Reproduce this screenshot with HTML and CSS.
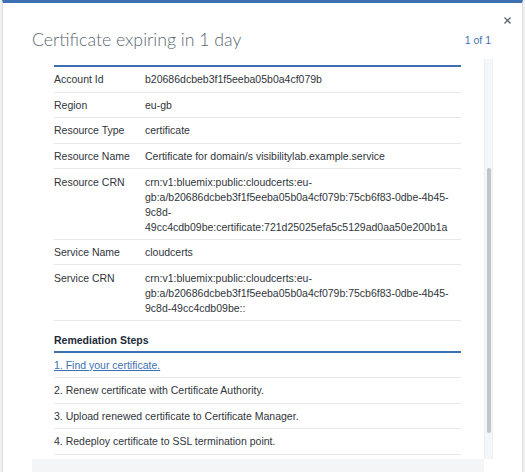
FILE: index.html
```html
<!DOCTYPE html>
<html lang="en">
<head>
<meta charset="utf-8">
<title>Certificate expiring in 1 day</title>
<link rel="stylesheet" href="styles.css">
</head>
<body>
<div class="modal" role="dialog" aria-labelledby="modal-title">
  <div class="modal-top">
    <button class="close" type="button" aria-label="Close">
      <svg width="7" height="7" viewBox="0 0 7 7" aria-hidden="true"><path d="M0.5 0.5L6.5 6.5M6.5 0.5L0.5 6.5" stroke="#5a6872" stroke-width="1.3" fill="none"/></svg>
    </button>
  </div>
  <div class="modal-header">
    <h2 class="title" id="modal-title">Certificate expiring in 1 day</h2>
    <span class="pager">1 of 1</span>
  </div>
  <div class="modal-body">
    <div class="scroll">
      <p class="summary">The certificate for domain/s visibilitylab.example.service managed in Certificate Manager will expire in 1 day. Renew and redeploy the certificate to avoid service interruption.</p>
      <h3 class="section-head">Certificate Details</h3>
      <table class="details">
        <tbody>
          <tr><td class="label">Account Id</td><td class="value">b20686dcbeb3f1f5eeba05b0a4cf079b</td></tr>
          <tr><td class="label">Region</td><td class="value">eu-gb</td></tr>
          <tr><td class="label">Resource Type</td><td class="value">certificate</td></tr>
          <tr><td class="label">Resource Name</td><td class="value">Certificate for domain/s visibilitylab.example.service</td></tr>
          <tr><td class="label">Resource CRN</td><td class="value">crn:v1:bluemix:public:cloudcerts:eu-<wbr>gb:a/b20686dcbeb3f1f5eeba05b0a4cf079b:75cb6f83-<wbr>0dbe-<wbr>4b45-<wbr>9c8d-<wbr>49cc4cdb09be:certificate:721d25025efa5c5129ad0aa50e200b1a</td></tr>
          <tr><td class="label">Service Name</td><td class="value">cloudcerts</td></tr>
          <tr><td class="label">Service CRN</td><td class="value">crn:v1:bluemix:public:cloudcerts:eu-<wbr>gb:a/b20686dcbeb3f1f5eeba05b0a4cf079b:75cb6f83-<wbr>0dbe-<wbr>4b45-<wbr>9c8d-<wbr>49cc4cdb09be::</td></tr>
        </tbody>
      </table>
      <h3 class="section-head steps-head">Remediation Steps</h3>
      <ol class="steps">
        <li><a href="#" class="step-link">1. Find your certificate.</a></li>
        <li>2. Renew certificate with Certificate Authority.</li>
        <li>3. Upload renewed certificate to Certificate Manager.</li>
        <li>4. Redeploy certificate to SSL termination point.</li>
      </ol>
    </div>
    <div class="track"><div class="thumb"></div></div>
  </div>
  <div class="modal-footer"></div>
</div>
<script src="script.js"></script>
</body>
</html>
```

FILE: styles.css
```css
* {
  box-sizing: border-box;
}

html,
body {
  margin: 0;
  height: 100%;
  overflow: hidden;
}

body {
  background: #eef0f2;
  font-family: "Liberation Sans", Arial, sans-serif;
  font-size: 10.5px;
  color: #30353a;
}

.modal {
  margin-left: 2px;
  width: 521px;
  height: 472px;
  background: #ffffff;
  border-top: 3px solid #3d70b2;
  border-left: 1px solid #dcdfe2;
  border-right: 1px solid #dcdfe2;
  display: flex;
  flex-direction: column;
}

.modal-top {
  display: flex;
  justify-content: flex-end;
  padding: 14px 11px 0 0;
}

.close {
  display: flex;
  border: 0;
  padding: 0;
  margin: 0;
  background: none;
  cursor: pointer;
}

.modal-header {
  display: flex;
  align-items: center;
  justify-content: space-between;
  margin-top: 4px;
  padding: 0 31px 0 29px;
  height: 24px;
}

.title {
  margin: 0;
  font-family: Lato, "Liberation Sans", sans-serif;
  font-weight: 300;
  font-size: 17.7px;
  line-height: 24px;
  color: #5a6872;
}

.pager {
  font-size: 10.5px;
  line-height: 15px;
  color: #3d70b2;
}

.modal-body {
  display: flex;
  margin: 7px 0 0 29px;
  width: 461px;
  height: 400px;
}

.scroll {
  flex: 1;
  overflow: hidden;
  padding: 0 23px 40px 22px;
}

.summary {
  margin: 0 0 40px;
  line-height: 15px;
}

.section-head {
  margin: 11.5px 0 0;
  padding-bottom: 3px;
  font-size: 10.5px;
  line-height: 15px;
  font-weight: 700;
  color: #1c2a36;
  border-bottom: 2px solid #3d70b2;
}

.details {
  width: 100%;
  border-collapse: collapse;
}

.details td {
  padding: 5.2px 0 4.4px;
  line-height: 15px;
  vertical-align: top;
  border-bottom: 1px solid #e6e8ea;
}

.details .label {
  width: 91px;
}

.steps {
  list-style: none;
  margin: 0;
  padding: 0;
}

.steps li {
  padding: 5.2px 0 4.4px;
  line-height: 15px;
  border-bottom: 1px solid #e6e8ea;
}

.step-link {
  color: #3d70b2;
  text-decoration: underline;
}

.track {
  width: 9px;
  background: #f5f6f7;
  border-left: 1px solid #eceef0;
  border-right: 1px solid #eceef0;
}

.thumb {
  margin: 109px 0 0 2px;
  width: 4px;
  height: 265px;
  border-radius: 2px;
  background: #c2c4c6;
}

.modal-footer {
  margin-left: 29px;
  width: 452px;
  flex: 1;
  background: #f4f5f7;
}
```

FILE: script.js
```js
function placeScroll() {
  var box = document.querySelector('.scroll');
  var table = document.querySelector('.details');
  box.scrollTop = 0;
  var offset = table.getBoundingClientRect().top - box.getBoundingClientRect().top;
  box.scrollTop = Math.round(offset - 8);
}
placeScroll();
window.addEventListener('load', placeScroll);
```
